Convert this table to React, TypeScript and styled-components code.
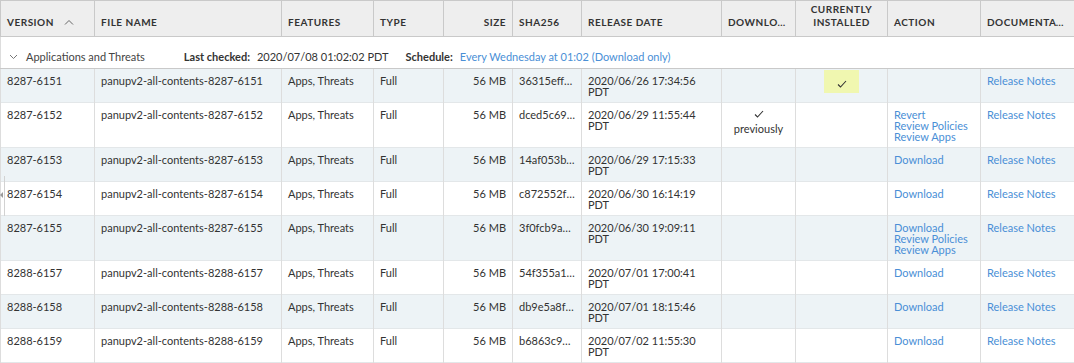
import styled, { createGlobalStyle } from "styled-components";

const GlobalStyle = createGlobalStyle`
    body {
        margin: 0;
        background: #ffffff;
        font-family: Lato, "Open Sans", Arial, sans-serif;
        color: #333333;
    }
`;

const Wrapper = styled.div`
    position: relative;
    width: 1074px;
    height: 363px;
    overflow: hidden;
`;

const Table = styled.table`
    width: 1074px;
    border-collapse: collapse;
    table-layout: fixed;
    font-size: 11px;
    line-height: 11px;
`;

const HeadCell = styled.th<{ $align?: string }>`
    height: 36px;
    padding: 0 6px 7px;
    box-sizing: border-box;
    vertical-align: bottom;
    text-align: ${({ $align }) => $align || "left"};
    background: #eeeeee;
    border: 1px solid #c9c9c9;
    font-size: 10px;
    line-height: 13px;
    font-weight: 700;
    letter-spacing: 0.5px;
    color: #333333;
    white-space: nowrap;
    overflow: hidden;
    text-overflow: ellipsis;
`;

const SortIcon = styled.svg`
    margin-left: 10px;
    vertical-align: 1px;
`;

const GroupCell = styled.td`
    height: 32px;
    padding: 8px 8px 0;
    box-sizing: border-box;
    border-left: 1px solid #dddddd;
    border-bottom: 1px solid #c9c9c9;
    background: #ffffff;
`;

const GroupBar = styled.div`
    display: flex;
    align-items: center;
    white-space: nowrap;
`;

const GroupTitle = styled.span`
    display: flex;
    align-items: center;
    gap: 8px;
    margin-right: 39px;
    color: #444444;
`;

const Label = styled.b`
    font-weight: 700;
    margin-right: 7px;
    color: #333333;
`;

const Value = styled.span`
    margin-right: 17px;
`;

const Row = styled.tr<{ $alt: boolean }>`
    background: ${({ $alt }) => ($alt ? "#edf3f6" : "#ffffff")};
    border-bottom: 1px solid #e3e7e9;
`;

const Cell = styled.td<{ $align?: string; $clip?: boolean }>`
    padding: 6px 6px 5px;
    vertical-align: top;
    text-align: ${({ $align }) => $align || "left"};
    border-left: 1px solid #dddddd;
    border-right: 1px solid #dddddd;
    ${({ $clip }) =>
        $clip &&
        `white-space: nowrap;
        overflow: hidden;
        text-overflow: ellipsis;`}
`;

const Link = styled.a`
    display: block;
    color: #4a8fd6;
    text-decoration: none;
    cursor: pointer;
`;

const InlineLink = styled.a`
    color: #4a8fd6;
    text-decoration: none;
`;

const Installed = styled.div`
    width: 35px;
    height: 23px;
    margin: -5px auto 0;
    background: #f0f7b0;
    display: flex;
    align-items: center;
    justify-content: center;
    padding-top: 4px;
    box-sizing: border-box;
`;

const Previously = styled.div`
    display: flex;
    flex-direction: column;
    align-items: center;
    gap: 5px;
    padding-top: 1px;
`;

const Grip = styled.div`
    position: absolute;
    left: 4px;
    top: 176px;
    width: 1px;
    height: 40px;
    background: #d2d2d2;

    &::before {
        content: "";
        position: absolute;
        left: -4px;
        top: 16px;
        border-top: 3px solid transparent;
        border-bottom: 3px solid transparent;
        border-right: 3px solid #9a9a9a;
    }
`;

const Check = () => (
    <svg width="10" height="8" viewBox="0 0 10 8">
        <polyline points="1,4.5 3.5,7 9,1" fill="none" stroke="#333" strokeWidth="1.1" />
    </svg>
);

const widths = [94, 187, 92, 70, 69, 69, 140, 74, 92, 93, 94];

type Item = {
    version: string;
    sha: string;
    date: string;
    installed?: boolean;
    previously?: boolean;
    actions: string[];
};

const items: Item[] = [
    { version: "8287-6151", sha: "36315eff4c2a", date: "2020/06/26 17:34:56", installed: true, actions: [] },
    { version: "8287-6152", sha: "dced5c69a1b0", date: "2020/06/29 11:55:44", previously: true, actions: ["Revert", "Review Policies", "Review Apps"] },
    { version: "8287-6153", sha: "14af053b9e21", date: "2020/06/29 17:15:33", actions: ["Download"] },
    { version: "8287-6154", sha: "c872552f0d3a", date: "2020/06/30 16:14:19", actions: ["Download"] },
    { version: "8287-6155", sha: "3f0fcb9a6e17", date: "2020/06/30 19:09:11", actions: ["Download", "Review Policies", "Review Apps"] },
    { version: "8288-6157", sha: "54f355a1c8d2", date: "2020/07/01 17:00:41", actions: ["Download"] },
    { version: "8288-6158", sha: "db9e5a8f7b44", date: "2020/07/01 18:15:46", actions: ["Download"] },
    { version: "8288-6159", sha: "b6863c96e0f1", date: "2020/07/02 11:55:30", actions: ["Download"] },
];

const App = () => {
    return (
        <Wrapper>
            <GlobalStyle />
            <Table>
                <colgroup>
                    {widths.map((w, i) => (
                        <col key={i} style={{ width: w }} />
                    ))}
                </colgroup>
                <thead>
                    <tr>
                        <HeadCell>
                            VERSION
                            <SortIcon width="10" height="6" viewBox="0 0 10 6">
                                <polyline points="1,5.5 5,1.5 9,5.5" fill="none" stroke="#666" strokeWidth="1" />
                            </SortIcon>
                        </HeadCell>
                        <HeadCell>FILE NAME</HeadCell>
                        <HeadCell>FEATURES</HeadCell>
                        <HeadCell>TYPE</HeadCell>
                        <HeadCell $align="right">SIZE</HeadCell>
                        <HeadCell>SHA256</HeadCell>
                        <HeadCell>RELEASE DATE</HeadCell>
                        <HeadCell>DOWNLOADED</HeadCell>
                        <HeadCell $align="center">
                            CURRENTLY
                            <br />
                            INSTALLED
                        </HeadCell>
                        <HeadCell>ACTION</HeadCell>
                        <HeadCell>DOCUMENTATION</HeadCell>
                    </tr>
                </thead>
                <tbody>
                    <tr>
                        <GroupCell colSpan={11}>
                            <GroupBar>
                                <GroupTitle>
                                    <svg width="9" height="6" viewBox="0 0 9 6">
                                        <polyline points="1,1 4.5,4.5 8,1" fill="none" stroke="#777" strokeWidth="1" />
                                    </svg>
                                    Applications and Threats
                                </GroupTitle>
                                <Label>Last checked:</Label>
                                <Value>2020/07/08 01:02:02 PDT</Value>
                                <Label>Schedule:</Label>
                                <InlineLink>Every Wednesday at 01:02 (Download only)</InlineLink>
                            </GroupBar>
                        </GroupCell>
                    </tr>
                    {items.map((item, i) => (
                        <Row key={item.version} $alt={i % 2 === 0}>
                            <Cell>{item.version}</Cell>
                            <Cell>panupv2-all-contents-{item.version}</Cell>
                            <Cell>Apps, Threats</Cell>
                            <Cell>Full</Cell>
                            <Cell $align="right">56 MB</Cell>
                            <Cell $clip>{item.sha}</Cell>
                            <Cell>
                                {item.date}
                                <br />
                                PDT
                            </Cell>
                            <Cell $align="center">
                                {item.previously && (
                                    <Previously>
                                        <Check />
                                        previously
                                    </Previously>
                                )}
                            </Cell>
                            <Cell>
                                {item.installed && (
                                    <Installed>
                                        <Check />
                                    </Installed>
                                )}
                            </Cell>
                            <Cell>
                                {item.actions.map((a) => (
                                    <Link key={a}>{a}</Link>
                                ))}
                            </Cell>
                            <Cell>
                                <Link>Release Notes</Link>
                            </Cell>
                        </Row>
                    ))}
                </tbody>
            </Table>
            <Grip />
        </Wrapper>
    );
};

export default App;
